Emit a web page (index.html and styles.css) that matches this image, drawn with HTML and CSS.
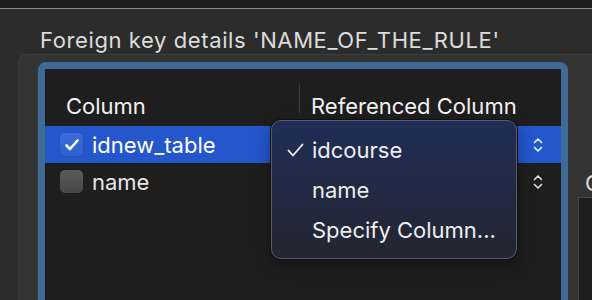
FILE: index.html
```html
<!DOCTYPE html>
<html lang="en">
<head>
    <meta charset="UTF-8">
    <title>Foreign key details</title>
    <link rel="stylesheet" href="styles.css">
</head>
<body>
    <div class="page">
        <div class="topbar"></div>

        <div class="title">Foreign key details 'NAME_OF_THE_RULE'</div>

        <div class="group">
            <div class="ring">
                <div class="table">
                    <div class="thead">
                        <div class="th col-1">Column</div>
                        <div class="th col-2"><span class="sep"></span>Referenced Column</div>
                    </div>
                    <div class="row selected">
                        <div class="td col-1">
                            <span class="checkbox checked">
                                <svg width="16" height="14" viewBox="0 0 16 14"><path d="M2.5 7.5 L6 11 L13.5 2.5" fill="none" stroke="#fff" stroke-width="2.6" stroke-linecap="round" stroke-linejoin="round"/></svg>
                            </span>
                            idnew_table
                        </div>
                        <div class="td col-2">
                            <svg class="stepper" width="10" height="16" viewBox="0 0 10 16"><path d="M1.5 5.5 L5 2 L8.5 5.5 M1.5 10.5 L5 14 L8.5 10.5" fill="none" stroke="#e8ecf8" stroke-width="1.7" stroke-linecap="round" stroke-linejoin="round"/></svg>
                        </div>
                    </div>
                    <div class="row">
                        <div class="td col-1">
                            <span class="checkbox"></span>
                            name
                        </div>
                        <div class="td col-2">
                            <svg class="stepper" width="10" height="16" viewBox="0 0 10 16"><path d="M1.5 5.5 L5 2 L8.5 5.5 M1.5 10.5 L5 14 L8.5 10.5" fill="none" stroke="#d8d8d8" stroke-width="1.7" stroke-linecap="round" stroke-linejoin="round"/></svg>
                        </div>
                    </div>
                </div>
            </div>

            <div class="side">
                <div class="side-label">C</div>
                <div class="side-box"></div>
            </div>
        </div>

        <!-- open popup menu of the Referenced Column cell -->
        <div class="menu">
            <div class="menu-item">
                <span class="check"><svg width="17" height="14" viewBox="0 0 17 14"><path d="M1.5 7.5 L6 12.5 L15.5 1.5" fill="none" stroke="#f0f0f0" stroke-width="1.8" stroke-linecap="round" stroke-linejoin="round"/></svg></span>
                idcourse
            </div>
            <div class="menu-item"><span class="check"></span>name</div>
            <div class="menu-item"><span class="check"></span>Specify Column...</div>
        </div>
    </div>
</body>
</html>
```

FILE: styles.css
```css
* {
    margin: 0;
    padding: 0;
    box-sizing: border-box;
}

body {
    font-family: Inter, "Liberation Sans", sans-serif;
    background: #2c2c2c;
    color: #e2e2e2;
    overflow: hidden;
}

.page {
    position: relative;
    width: 592px;
    height: 300px;
    overflow: hidden;
}

.topbar {
    height: 9px;
    background: #1e1e1e;
    border-bottom: 1px solid #8c8c8c;
}

.title {
    padding: 18px 0 0 40px;
    font-size: 22px;
    line-height: 26px;
    letter-spacing: 0.6px;
    color: #dcdcdc;
    white-space: nowrap;
}

.group {
    display: flex;
    width: 700px;
    height: 260px;
    margin: 1px 0 0 18px;
    padding: 7px 0 0 19px;
    background: #333333;
    border: 1px solid #3b3b3b;
    border-radius: 8px;
}

.ring {
    width: 530px;
    height: 260px;
    border: 7px solid #416b97;
    border-radius: 8px;
    background: #1e1e1e;
    flex-shrink: 0;
}

.table {
    font-size: 22px;
    line-height: 26px;
}

.thead {
    display: flex;
    height: 57px;
    padding-top: 16px;
    color: #f2f2f2;
}

.col-1 {
    width: 254px;
    padding-left: 21px;
    display: flex;
    align-items: center;
}

.col-2 {
    flex: 1;
    display: flex;
    align-items: center;
}

.th.col-2 {
    position: relative;
    padding-left: 12px;
}

.sep {
    position: absolute;
    left: 0;
    top: -2px;
    width: 1px;
    height: 30px;
    background: #3a3a3a;
}

.row {
    display: flex;
    height: 37px;
    color: #e6e6e6;
}

.row .col-1 {
    padding-left: 15px;
    gap: 9px;
}

.row .col-2 {
    justify-content: flex-end;
    padding-right: 18px;
}

.row.selected {
    background: #2456cc;
    color: #ffffff;
}

.checkbox {
    width: 23px;
    height: 23px;
    border-radius: 5px;
    background: linear-gradient(#5a5a5a, #474747);
    display: flex;
    align-items: center;
    justify-content: center;
    flex-shrink: 0;
}

.checkbox.checked {
    background: linear-gradient(#3a6ddc, #2f5fcf);
    box-shadow: 0 0 0 1px #2a52b4;
}

.side {
    margin-left: 10px;
    flex: 1;
}

.side-label {
    padding: 108px 0 0 7px;
    font-size: 22px;
    line-height: 26px;
    color: #dcdcdc;
}

.side-box {
    height: 120px;
    margin-top: 1px;
    background: #1e1e1e;
    border: 1px solid #4a4a4a;
}

.menu {
    position: absolute;
    left: 271px;
    top: 120px;
    width: 246px;
    height: 139px;
    padding: 9px 0 8px 0;
    border: 1px solid #565c6c;
    border-radius: 10px;
    background: linear-gradient(#1f2d56, #232631);
    box-shadow: 0 0 0 1px #111, 0 6px 16px rgba(0, 0, 0, 0.4);
    font-size: 22px;
    line-height: 26px;
    color: #eeeeee;
}

.menu-item {
    display: flex;
    align-items: center;
    height: 40px;
    padding-left: 15px;
    white-space: nowrap;
}

.check {
    width: 25px;
    display: flex;
    align-items: center;
}
```
